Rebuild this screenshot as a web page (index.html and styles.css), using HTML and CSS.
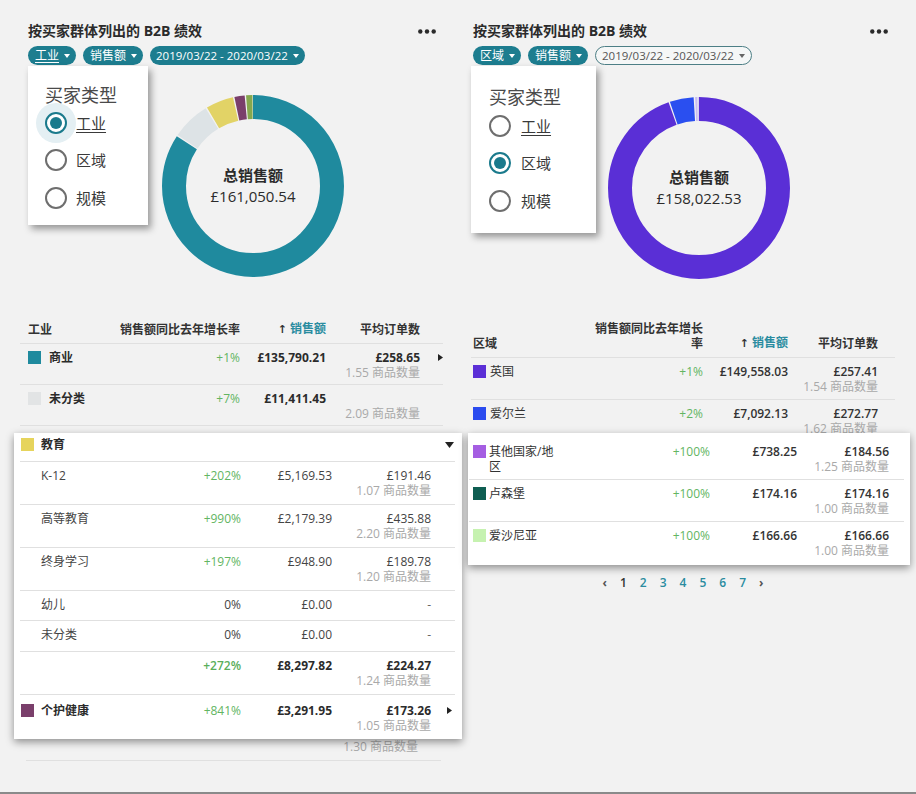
FILE: index.html
```html
<!DOCTYPE html>
<html lang="zh-CN">
<head>
<meta charset="utf-8">
<title>B2B 绩效</title>
<link rel="stylesheet" href="styles.css">
</head>
<body>
<div class="page">

  <section class="panel panel-left">
    <header class="panel-head">
      <h2 class="panel-title">按买家群体列出的 B2B 绩效</h2>
      <svg class="more" width="18" height="5" viewBox="0 0 18 5"><circle cx="2.3" cy="2.5" r="2.2"/><circle cx="9" cy="2.5" r="2.2"/><circle cx="15.7" cy="2.5" r="2.2"/></svg>
    </header>
    <div class="filters">
      <span class="pill"><u>工业</u><svg class="caret" width="6" height="4" viewBox="0 0 6 4"><path d="M0 0H6L3 4Z"/></svg></span>
      <span class="pill">销售额<svg class="caret" width="6" height="4" viewBox="0 0 6 4"><path d="M0 0H6L3 4Z"/></svg></span>
      <span class="pill pill-date">2019/03/22 - 2020/03/22<svg class="caret" width="6" height="4" viewBox="0 0 6 4"><path d="M0 0H6L3 4Z"/></svg></span>
    </div>
    <div class="chart-area">
      <div class="menu menu-left">
        <div class="menu-title">买家类型</div>
        <div class="radio-list">
          <div class="radio-row"><span class="radio checked halo"></span><span class="radio-label"><u>工业</u></span></div>
          <div class="radio-row"><span class="radio"></span><span class="radio-label">区域</span></div>
          <div class="radio-row"><span class="radio"></span><span class="radio-label">规模</span></div>
        </div>
      </div>
      <div class="donut donut-left">
        <svg width="182" height="182" viewBox="0 0 182 182">
          <g transform="rotate(-90 91 91)" fill="none" stroke-width="24">
            <circle cx="91" cy="91" r="79" stroke="#1f8a9e" stroke-dasharray="417.3 496.4" stroke-dashoffset="0"/>
            <circle cx="91" cy="91" r="79" stroke="#dde3e6" stroke-dasharray="33.9 496.4" stroke-dashoffset="-418.5"/>
            <circle cx="91" cy="91" r="79" stroke="#e2d366" stroke-dasharray="24.3 496.4" stroke-dashoffset="-453.7"/>
            <circle cx="91" cy="91" r="79" stroke="#7a3f6b" stroke-dasharray="8.9 496.4" stroke-dashoffset="-479.3"/>
            <circle cx="91" cy="91" r="79" stroke="#86a84e" stroke-dasharray="5.7 496.4" stroke-dashoffset="-489.4"/>
          </g>
        </svg>
        <div class="donut-label"><b>总销售额</b><span>£161,050.54</span></div>
      </div>
    </div>

    <div class="table table-left">
      <div class="t-row head">
        <div class="c-name">工业</div>
        <div class="c-num">销售额同比去年增长率</div>
        <div class="c-num"><span class="sort">↑</span> <span class="teal">销售额</span></div>
        <div class="c-num">平均订单数</div>
        <div></div>
      </div>
      <div class="t-row">
        <div class="c-name strong"><i class="sq sq-teal"></i><span>商业</span></div>
        <div class="c-num green">+1%</div>
        <div class="c-num strong">£135,790.21</div>
        <div class="c-num"><div class="strong">£258.65</div><div class="sub">1.55 商品数量</div></div>
        <div class="c-end"><svg width="5" height="7" viewBox="0 0 5 7"><path d="M0 0L5 3.5L0 7Z"/></svg></div>
      </div>
      <div class="t-row tight">
        <div class="c-name strong"><i class="sq sq-lgray"></i><span>未分类</span></div>
        <div class="c-num green">+7%</div>
        <div class="c-num strong">£11,411.45</div>
        <div class="c-num"><div class="blank"></div><div class="sub">2.09 商品数量</div></div>
        <div></div>
      </div>

      <div class="card card-left">
        <div class="k-row k-head">
          <div class="c-name strong"><i class="sq sq-yellow"></i><span>教育</span></div>
          <div></div><div></div><div></div>
          <div class="c-end"><svg width="9" height="6" viewBox="0 0 9 6"><path d="M0 0H9L4.5 6Z"/></svg></div>
        </div>
        <div class="k-row">
          <div class="c-name indent">K-12</div>
          <div class="c-num green">+202%</div>
          <div class="c-num">£5,169.53</div>
          <div class="c-num"><div>£191.46</div><div class="sub">1.07 商品数量</div></div>
          <div></div>
        </div>
        <div class="k-row">
          <div class="c-name indent">高等教育</div>
          <div class="c-num green">+990%</div>
          <div class="c-num">£2,179.39</div>
          <div class="c-num"><div>£435.88</div><div class="sub">2.20 商品数量</div></div>
          <div></div>
        </div>
        <div class="k-row">
          <div class="c-name indent">终身学习</div>
          <div class="c-num green">+197%</div>
          <div class="c-num">£948.90</div>
          <div class="c-num"><div>£189.78</div><div class="sub">1.20 商品数量</div></div>
          <div></div>
        </div>
        <div class="k-row single">
          <div class="c-name indent">幼儿</div>
          <div class="c-num">0%</div>
          <div class="c-num">£0.00</div>
          <div class="c-num dash">-</div>
          <div></div>
        </div>
        <div class="k-row single wide">
          <div class="c-name indent">未分类</div>
          <div class="c-num">0%</div>
          <div class="c-num">£0.00</div>
          <div class="c-num dash">-</div>
          <div></div>
        </div>
        <div class="k-row">
          <div class="c-name"></div>
          <div class="c-num green semibold">+272%</div>
          <div class="c-num strong">£8,297.82</div>
          <div class="c-num"><div class="strong">£224.27</div><div class="sub">1.24 商品数量</div></div>
          <div></div>
        </div>
        <div class="k-row last">
          <div class="c-name strong"><i class="sq sq-plum"></i><span>个护健康</span></div>
          <div class="c-num green">+841%</div>
          <div class="c-num strong">£3,291.95</div>
          <div class="c-num"><div class="strong">£173.26</div><div class="sub">1.05 商品数量</div></div>
          <div class="c-end"><svg width="5" height="7" viewBox="0 0 5 7"><path d="M0 0L5 3.5L0 7Z"/></svg></div>
        </div>
      </div>
      <div class="remnant"><span class="sub">1.30 商品数量</span></div>
    </div>
  </section>

  <section class="panel panel-right">
    <header class="panel-head">
      <h2 class="panel-title">按买家群体列出的 B2B 绩效</h2>
      <svg class="more" width="18" height="5" viewBox="0 0 18 5"><circle cx="2.3" cy="2.5" r="2.2"/><circle cx="9" cy="2.5" r="2.2"/><circle cx="15.7" cy="2.5" r="2.2"/></svg>
    </header>
    <div class="filters">
      <span class="pill">区域<svg class="caret" width="6" height="4" viewBox="0 0 6 4"><path d="M0 0H6L3 4Z"/></svg></span>
      <span class="pill">销售额<svg class="caret" width="6" height="4" viewBox="0 0 6 4"><path d="M0 0H6L3 4Z"/></svg></span>
      <span class="pill pill-date pill-outline">2019/03/22 - 2020/03/22<svg class="caret" width="6" height="4" viewBox="0 0 6 4"><path d="M0 0H6L3 4Z"/></svg></span>
    </div>
    <div class="chart-area">
      <div class="menu menu-right">
        <div class="menu-title">买家类型</div>
        <div class="radio-list">
          <div class="radio-row"><span class="radio"></span><span class="radio-label"><u>工业</u></span></div>
          <div class="radio-row"><span class="radio checked"></span><span class="radio-label">区域</span></div>
          <div class="radio-row"><span class="radio"></span><span class="radio-label">规模</span></div>
        </div>
      </div>
      <div class="donut donut-right">
        <svg width="182" height="182" viewBox="0 0 182 182">
          <g transform="rotate(-90 91 91)" fill="none" stroke-width="24">
            <circle cx="91" cy="91" r="79" stroke="#5a2fd6" stroke-dasharray="468.6 496.4" stroke-dashoffset="0"/>
            <circle cx="91" cy="91" r="79" stroke="#2a4ff0" stroke-dasharray="21.0 496.4" stroke-dashoffset="-469.8"/>
            <circle cx="91" cy="91" r="79" stroke="#c9bdf2" stroke-dasharray="2.0 496.4" stroke-dashoffset="-492.1"/>
            <circle cx="91" cy="91" r="79" stroke="#d7d0f0" stroke-dasharray="1.6 496.4" stroke-dashoffset="-494.4"/>
          </g>
        </svg>
        <div class="donut-label"><b>总销售额</b><span>£158,022.53</span></div>
      </div>
    </div>

    <div class="table table-right">
      <div class="t-row head">
        <div class="c-name">区域</div>
        <div class="c-num">销售额同比去年增长率</div>
        <div class="c-num"><span class="sort">↑</span> <span class="teal">销售额</span></div>
        <div class="c-num">平均订单数</div>
        <div></div>
      </div>
      <div class="t-row">
        <div class="c-name"><i class="sq sq-violet"></i><span>英国</span></div>
        <div class="c-num green">+1%</div>
        <div class="c-num semibold">£149,558.03</div>
        <div class="c-num"><div class="semibold">£257.41</div><div class="sub">1.54 商品数量</div></div>
        <div></div>
      </div>
      <div class="t-row">
        <div class="c-name"><i class="sq sq-blue"></i><span>爱尔兰</span></div>
        <div class="c-num green">+2%</div>
        <div class="c-num semibold">£7,092.13</div>
        <div class="c-num"><div class="semibold">£272.77</div><div class="sub">1.62 商品数量</div></div>
        <div></div>
      </div>

      <div class="card card-right">
        <div class="k-row">
          <div class="c-name"><i class="sq sq-lilac"></i><span class="name-narrow">其他国家/地区</span></div>
          <div class="c-num green">+100%</div>
          <div class="c-num semibold">£738.25</div>
          <div class="c-num"><div class="semibold">£184.56</div><div class="sub">1.25 商品数量</div></div>
          <div></div>
        </div>
        <div class="k-row">
          <div class="c-name"><i class="sq sq-pine"></i><span>卢森堡</span></div>
          <div class="c-num green">+100%</div>
          <div class="c-num semibold">£174.16</div>
          <div class="c-num"><div class="semibold">£174.16</div><div class="sub">1.00 商品数量</div></div>
          <div></div>
        </div>
        <div class="k-row last">
          <div class="c-name"><i class="sq sq-mint"></i><span>爱沙尼亚</span></div>
          <div class="c-num green">+100%</div>
          <div class="c-num semibold">£166.66</div>
          <div class="c-num"><div class="semibold">£166.66</div><div class="sub">1.00 商品数量</div></div>
          <div></div>
        </div>
      </div>

      <nav class="pager">
        <span class="chev">‹</span>
        <span class="pg current">1</span>
        <span class="pg">2</span>
        <span class="pg">3</span>
        <span class="pg">4</span>
        <span class="pg">5</span>
        <span class="pg">6</span>
        <span class="pg">7</span>
        <span class="chev">›</span>
      </nav>
    </div>
  </section>

</div>
</body>
</html>
```

FILE: styles.css
```css
* { box-sizing: border-box; }

body {
  margin: 0;
  background: #f2f2f2;
  font-family: "Open Sans", "Noto Sans CJK SC", sans-serif;
  font-size: 12px;
  color: #333;
}

.page {
  display: grid;
  grid-template-columns: 458px 458px;
  height: 794px;
  border-bottom: 2px solid #8a8a8a;
  overflow: hidden;
}

.panel-left { padding: 0 15px 0 20px; }
.panel-right { padding: 0 21px 0 13px; }

.panel-head {
  display: flex;
  justify-content: space-between;
  align-items: center;
  padding-top: 22px;
  padding-right: 7px;
  height: 40px;
}
.panel-left .panel-head { padding-left: 8px; }
.panel-right .panel-head { padding-left: 2px; }

.panel-title {
  margin: 0;
  font-size: 14px;
  line-height: 18px;
  font-weight: 700;
  color: #2b2b2b;
}

.more { fill: #2b2b2b; display: block; }

.filters {
  display: flex;
  gap: 7px;
  margin-top: 6px;
  height: 19px;
}
.panel-left .filters { padding-left: 8px; }
.panel-right .filters { padding-left: 2px; }

.pill {
  display: inline-flex;
  align-items: center;
  gap: 5px;
  height: 19px;
  padding: 0 6px 0 7px;
  border-radius: 10px;
  background: #1d7d8f;
  color: #fff;
  font-size: 12px;
  line-height: 19px;
}
.pill u { text-decoration-thickness: 1px; text-underline-offset: 2px; }
.pill-date { font-size: 11.5px; padding: 0 6px 0 6px; }
.caret { fill: #fff; display: block; }

.pill-outline {
  background: #f5f7f7;
  color: #555;
  border: 1.5px solid #4d7f86;
}
.pill-outline .caret { fill: #666; }

.chart-area {
  position: relative;
  display: flow-root;
  height: 256px;
}

.menu {
  position: absolute;
  top: 1px;
  background: #fff;
  box-shadow: 3px 4px 7px rgba(0, 0, 0, 0.38);
  z-index: 5;
}
.menu-left { left: 8px; width: 120px; height: 159px; padding: 17px 0 0 17px; }
.menu-right { left: 0; width: 125px; height: 167px; padding: 19px 0 0 18px; }

.menu-title {
  font-size: 18px;
  line-height: 24px;
  color: #4a4a4a;
}

.radio-list { margin-top: -3px; }
.menu-right .radio-list { margin-top: -2px; }

.radio-row {
  display: flex;
  align-items: center;
  height: 37.5px;
  gap: 9px;
}
.menu-right .radio-row { gap: 10px; }

.radio {
  position: relative;
  width: 22px;
  height: 22px;
  border-radius: 50%;
  border: 2px solid #6e6e6e;
  background: #fff;
  flex: none;
}
.radio.checked { border-color: #1a7a8c; }
.radio.checked::after {
  content: "";
  position: absolute;
  left: 3px;
  top: 3px;
  width: 12px;
  height: 12px;
  border-radius: 50%;
  background: #1a7a8c;
}
.radio.halo { box-shadow: 0 0 0 9px #e4eff3; }

.radio-label {
  font-size: 15px;
  line-height: 20px;
  color: #3a3a3a;
}
.radio-label u { text-decoration-thickness: 1px; text-underline-offset: 3px; }

.donut {
  display: grid;
  width: 182px;
  height: 182px;
}
.donut > * { grid-area: 1 / 1; }
.donut svg { display: block; }
.donut-left { margin: 30px 0 0 142px; }
.donut-right { margin: 32px 0 0 137px; }

.donut-label {
  display: flex;
  flex-direction: column;
  align-items: center;
  justify-content: center;
  font-size: 15px;
  line-height: 21px;
  color: #2b2b2b;
}
.donut-label b { font-weight: 700; }

/* tables */
.t-row, .k-row {
  display: grid;
  line-height: 15px;
  border-bottom: 1px solid #e0e0e0;
}
.table-left .t-row { grid-template-columns: 100px 120px 86px 94px 23px; padding: 6px 0 4px; }
.table-left .t-row.head { padding: 0 0 6px; align-items: end; }
.table-right .t-row { grid-template-columns: 122px 110px 85px 90px 17px; padding: 6px 0 5px; }
.table-right .t-row.head { padding: 0 0 6px; align-items: end; }

.head { font-weight: 700; color: #333; }
.head .teal { color: #2a8ca0; font-weight: 600; }
.sort { font-size: 11px; font-family: "DejaVu Sans", sans-serif; font-weight: 700; }

.c-name { display: flex; align-items: flex-start; gap: 8px; }
.table-left .t-row .c-name { padding-left: 8px; }
.table-right .t-row .c-name { padding-left: 2px; gap: 4px; }
.c-num { text-align: right; }
.c-end { display: flex; justify-content: flex-end; padding-top: 4px; }
.c-end svg { fill: #222; display: block; }

.strong { font-weight: 700; color: #2b2b2b; }
.semibold { font-weight: 600; color: #333; }
.green { color: #62b562; }
.green.semibold { color: #5aae5a; }
.sub { color: #a9a9a9; }
.blank { height: 15px; }
.dash { color: #666; }

.sq {
  display: block;
  width: 13px;
  height: 13px;
  margin-top: 1px;
  flex: none;
}
.sq-teal { background: #1f8a9e; }
.sq-lgray { background: #e2e4e5; }
.sq-yellow { background: #e6d45c; }
.sq-plum { background: #7a3f6b; }
.sq-violet { background: #5b2fd6; }
.sq-blue { background: #2a4bef; }
.sq-lilac { background: #a55ee2; }
.sq-pine { background: #0f5e52; }
.sq-mint { background: #c6f2b0; }

.card {
  position: relative;
  z-index: 2;
  background: #fff;
  box-shadow: 0 3px 8px rgba(0, 0, 0, 0.42);
}
.card-left { margin: 7px -19px 0 -6px; padding: 0 7px 1px 6px; }
.card-right { margin: -9px -15px 0 -3px; padding: 5px 6px 1px 1px; }

.card-left .k-row { grid-template-columns: 101px 120px 91px 99px 24px; padding: 6px 0 6px; color: #444; }
.card-left .k-row.k-head { padding: 4px 0 9px; }
.card-left .k-row.single { padding: 6px 0 8px; }
.card-left .k-row.single.wide { padding: 6px 0 9px; }
.card-left .k-row.last { padding: 8px 0 5px; border-bottom: 0; }
.card-left .c-name { padding-left: 1px; gap: 7px; }
.card-left .c-name.indent { padding-left: 21px; }
.card-left .k-head .c-end { padding-top: 5px; padding-right: 1px; }
.card-left .k-row.last .c-end { padding-right: 3px; }

.card-right .k-row { grid-template-columns: 131px 110px 87px 92px 15px; padding: 6px 0 5px; }
.card-right .k-row.last { padding: 6px 0 6px; border-bottom: 0; }
.card-right .c-name { padding-left: 4px; gap: 3px; }
.name-narrow { max-width: 70px; }

.remnant {
  text-align: right;
  padding: 0 23px 6px 0;
  line-height: 15px;
  border-bottom: 1px solid #e0e0e0;
  margin-left: 6px;
  margin-right: 2px;
}

.pager {
  display: flex;
  justify-content: center;
  gap: 13px;
  margin-top: 10px;
  line-height: 15px;
  font-weight: 600;
}
.pg { color: #2a8ca0; }
.pg.current { color: #333; }
.chev { color: #555; font-weight: 700; }
```
